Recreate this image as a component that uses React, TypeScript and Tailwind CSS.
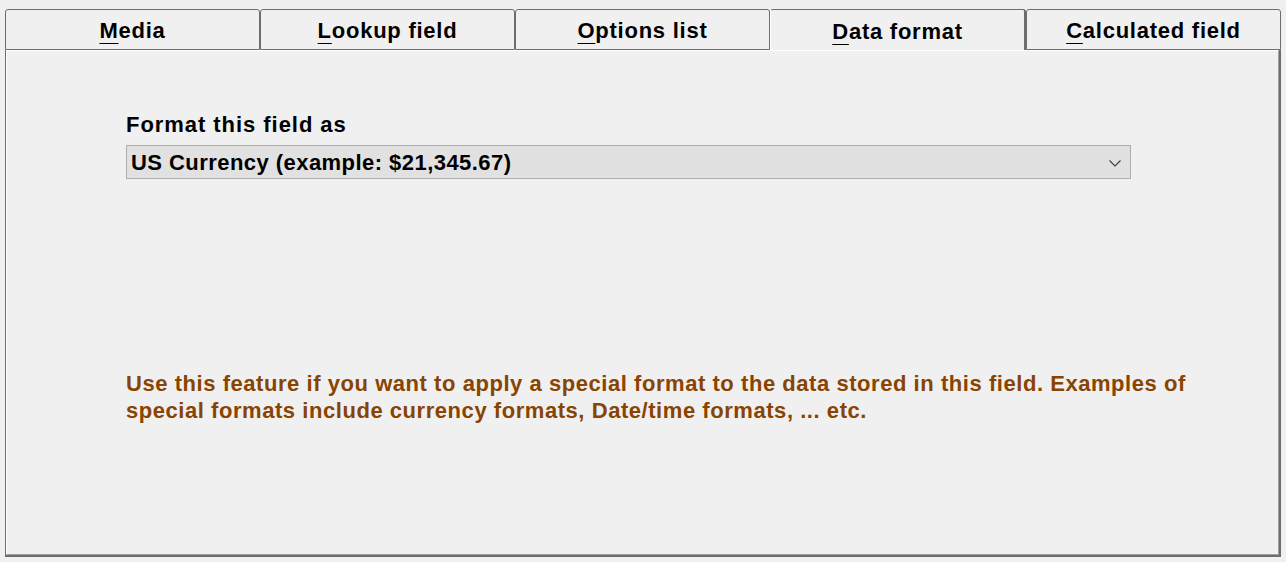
import React from 'react';

const TABS = [
  { key: 'M', rest: 'edia' },
  { key: 'L', rest: 'ookup field' },
  { key: 'O', rest: 'ptions list' },
  { key: 'D', rest: 'ata format' },
  { key: 'C', rest: 'alculated field' },
];

const SELECTED = 3;

export default function App() {
  return (
    <div
      className="w-[1286px] h-[562px] bg-[#f0f0f0] px-[5px] pt-[9px] pb-[5px] flex flex-col text-black"
      style={{ fontFamily: '"Liberation Sans", Arial, sans-serif' }}
    >
      {/* tab strip */}
      <div className="flex h-[41px]">
        {TABS.map((tab, i) => {
          const selected = i === SELECTED;
          return (
            <div
              key={tab.key}
              className={
                selected
                  ? 'flex-1 flex items-center justify-center pt-[3px] border-t border-l border-l-white border-t-[#6d6d6d] border-r-2 border-r-[#6d6d6d] rounded-tl-[3px] rounded-tr-[3px] bg-[#f0f0f0]'
                  : 'flex-1 flex items-center justify-center pt-[2px] border-t border-l border-b border-[#6d6d6d] border-r border-r-[#6d6d6d] rounded-tl-[3px] rounded-tr-[3px] bg-[#f0f0f0]'
              }
            >
              <span className="text-[22px] font-bold leading-[26px] tracking-[0.75px]">
                <span className="underline decoration-1 underline-offset-[5px]">{tab.key}</span>
                {tab.rest}
              </span>
            </div>
          );
        })}
      </div>

      {/* page */}
      <div className="flex-1 border-l border-[#6d6d6d] border-r-2 border-r-[#6d6d6d] border-b-2 border-b-[#6d6d6d]">
        <div className="h-full border-l border-t border-white border-r border-r-[#a0a0a0] border-b border-b-[#a0a0a0] pl-[119px] pt-[61px]">
          <div className="text-[22px] font-bold leading-[26px] tracking-[0.95px]">Format this field as</div>

          <div className="mt-[7px] w-[1005px] h-[34px] bg-[#e1e1e1] border border-[#adadad] flex items-center justify-between pl-[4px] pr-[9px] pt-[2px]">
            <span className="text-[22px] font-bold leading-[26px] tracking-[0.45px]">
              US Currency (example: $21,345.67)
            </span>
            <svg width="12" height="7" viewBox="0 0 12 7" fill="none">
              <path d="M0.5 0.5 L6 6 L11.5 0.5" stroke="#404040" strokeWidth="1.2" />
            </svg>
          </div>

          <p className="mt-[191px] text-[22px] font-bold leading-[27px] tracking-[0.55px] text-[#884400]">
            Use this feature if you want to apply a special format to the data stored in this field. Examples of
            <br />
            special formats include currency formats, Date/time formats, ... etc.
          </p>
        </div>
      </div>
    </div>
  );
}
